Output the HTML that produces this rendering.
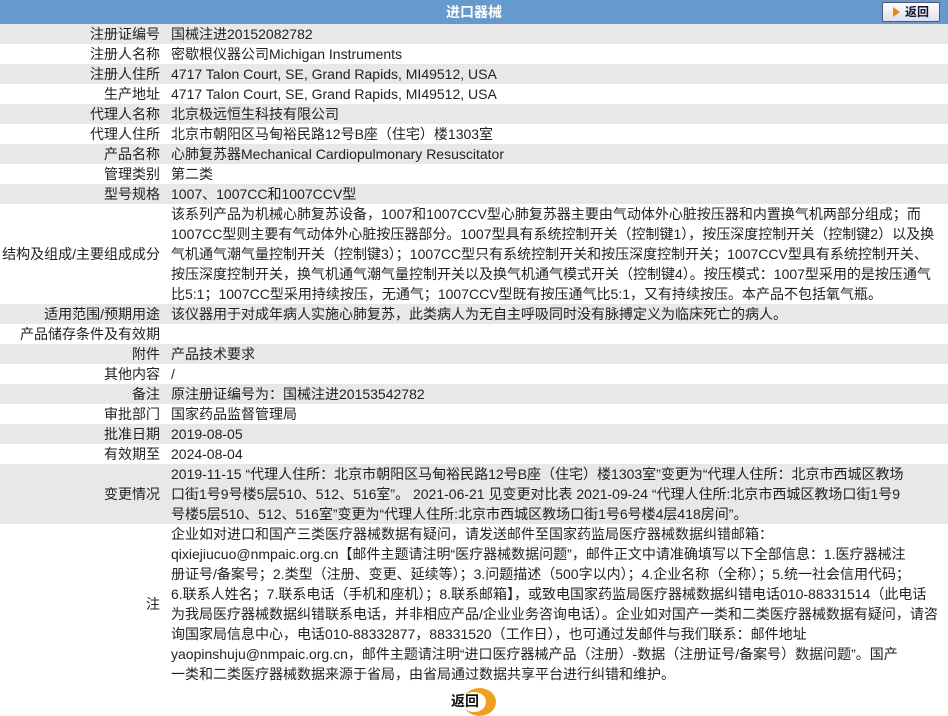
<!DOCTYPE html>
<html><head><meta charset="utf-8"><style>
body{margin:0;width:948px;height:716px;background:#fff;font-family:"Liberation Sans","Noto Sans CJK SC",sans-serif;font-size:14px;color:#222;overflow:hidden}
.hd{height:24px;background:#6699cc;color:#fff;font-weight:bold;text-align:center;line-height:24px;font-size:14px;position:relative}
.btn{position:absolute;left:882px;top:2px;width:56px;height:18px;background:linear-gradient(#fff,#dde);border:1px solid #557;border-radius:2px;color:#113;font-size:12px;line-height:18px;text-align:left}
.btn i{display:inline-block;width:0;height:0;border-left:7px solid #e88a10;border-top:5px solid transparent;border-bottom:5px solid transparent;margin:0 5px 0 10px;vertical-align:-1px}
table{border-collapse:collapse;width:948px}
td{padding:0;line-height:20px;height:20px;vertical-align:middle;white-space:nowrap}
td.l{width:160px;text-align:right;padding-right:11px}
tr:nth-child(odd){background:#e8e8e8}
.ft{position:relative;height:32px}
</style></head><body>
<div class="hd">进口器械<div class="btn"><i></i>返回</div></div>
<table>
<tr><td class="l">注册证编号</td><td>国械注进20152082782</td></tr>
<tr><td class="l">注册人名称</td><td>密歇根仪器公司Michigan Instruments</td></tr>
<tr><td class="l">注册人住所</td><td>4717 Talon Court, SE, Grand Rapids, MI49512, USA</td></tr>
<tr><td class="l">生产地址</td><td>4717 Talon Court, SE, Grand Rapids, MI49512, USA</td></tr>
<tr><td class="l">代理人名称</td><td>北京极远恒生科技有限公司</td></tr>
<tr><td class="l">代理人住所</td><td>北京市朝阳区马甸裕民路12号B座（住宅）楼1303室</td></tr>
<tr><td class="l">产品名称</td><td>心肺复苏器Mechanical Cardiopulmonary Resuscitator</td></tr>
<tr><td class="l">管理类别</td><td>第二类</td></tr>
<tr><td class="l">型号规格</td><td>1007、1007CC和1007CCV型</td></tr>
<tr><td class="l">结构及组成/主要组成成分</td><td>该系列产品为机械心肺复苏设备，1007和1007CCV型心肺复苏器主要由气动体外心脏按压器和内置换气机两部分组成；而<br>1007CC型则主要有气动体外心脏按压器部分。1007型具有系统控制开关（控制键1），按压深度控制开关（控制键2）以及换<br>气机通气潮气量控制开关（控制键3）；1007CC型只有系统控制开关和按压深度控制开关；1007CCV型具有系统控制开关、<br>按压深度控制开关，换气机通气潮气量控制开关以及换气机通气模式开关（控制键4）。按压模式：1007型采用的是按压通气<br>比5:1；1007CC型采用持续按压，无通气；1007CCV型既有按压通气比5:1，又有持续按压。本产品不包括氧气瓶。</td></tr>
<tr><td class="l">适用范围/预期用途</td><td>该仪器用于对成年病人实施心肺复苏，此类病人为无自主呼吸同时没有脉搏定义为临床死亡的病人。</td></tr>
<tr><td class="l">产品储存条件及有效期</td><td></td></tr>
<tr><td class="l">附件</td><td>产品技术要求</td></tr>
<tr><td class="l">其他内容</td><td>/</td></tr>
<tr><td class="l">备注</td><td>原注册证编号为：国械注进20153542782</td></tr>
<tr><td class="l">审批部门</td><td>国家药品监督管理局</td></tr>
<tr><td class="l">批准日期</td><td>2019-08-05</td></tr>
<tr><td class="l">有效期至</td><td>2024-08-04</td></tr>
<tr><td class="l">变更情况</td><td>2019-11-15 “代理人住所：北京市朝阳区马甸裕民路12号B座（住宅）楼1303室”变更为“代理人住所：北京市西城区教场<br>口街1号9号楼5层510、512、516室”。 2021-06-21 见变更对比表 2021-09-24 “代理人住所:北京市西城区教场口街1号9<br>号楼5层510、512、516室”变更为“代理人住所:北京市西城区教场口街1号6号楼4层418房间”。</td></tr>
<tr><td class="l">注</td><td>企业如对进口和国产三类医疗器械数据有疑问，请发送邮件至国家药监局医疗器械数据纠错邮箱：<br>qixiejiucuo@nmpaic.org.cn【邮件主题请注明“医疗器械数据问题”，邮件正文中请准确填写以下全部信息：1.医疗器械注<br>册证号/备案号；2.类型（注册、变更、延续等）；3.问题描述（500字以内）；4.企业名称（全称）；5.统一社会信用代码；<br>6.联系人姓名；7.联系电话（手机和座机）；8.联系邮箱】，或致电国家药监局医疗器械数据纠错电话010-88331514（此电话<br>为我局医疗器械数据纠错联系电话，并非相应产品/企业业务咨询电话）。企业如对国产一类和二类医疗器械数据有疑问，请咨<br>询国家局信息中心，电话010-88332877，88331520（工作日），也可通过发邮件与我们联系：邮件地址<br>yaopinshuju@nmpaic.org.cn，邮件主题请注明“进口医疗器械产品（注册）-数据（注册证号/备案号）数据问题”。国产<br>一类和二类医疗器械数据来源于省局，由省局通过数据共享平台进行纠错和维护。</td></tr>
</table>
<div class="ft">
<div style="position:absolute;left:463px;top:4px;width:33px;height:28px;border-radius:50%;background:#f0a020"></div>
<div style="position:absolute;left:462px;top:8px;width:24px;height:20px;border-radius:50%;background:#fff"></div>
<div style="position:absolute;left:451px;top:6px;font-weight:bold;font-size:14px;line-height:22px;color:#111">返回</div>
</div>
</body></html>
